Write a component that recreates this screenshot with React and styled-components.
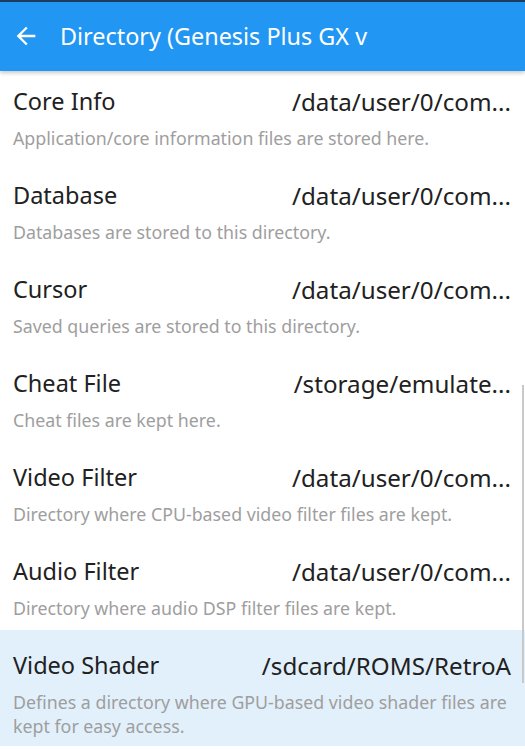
import React from "react";
import styled, { createGlobalStyle } from "styled-components";

const GlobalStyle = createGlobalStyle`
  html, body {
    margin: 0;
    padding: 0;
    background: #ffffff;
    font-family: "Noto Sans", "Open Sans", sans-serif;
  }
`;

const Screen = styled.div`
  position: relative;
  width: 525px;
  height: 750px;
  overflow: hidden;
  background: #fff;
`;

const StatusStrip = styled.div`
  height: 2px;
  background: #1d3d5e;
`;

const Toolbar = styled.header`
  position: relative;
  z-index: 2;
  height: 69px;
  background: #2196f3;
  display: flex;
  align-items: center;
  padding-left: 12px;
  padding-bottom: 2px;
  box-sizing: border-box;
  gap: 20px;
  box-shadow: 0 2px 4px rgba(0, 0, 0, 0.22);
`;

const Title = styled.h1`
  margin: 0;
  color: #fff;
  font-size: 23.4px;
  font-weight: 400;
  white-space: nowrap;
`;

const List = styled.div`
  margin-top: -5px;
  display: flex;
  flex-direction: column;
`;

const Item = styled.div`
  padding: 20px 14px 10px 13px;
  background: ${(p) => (p.$active ? "#e2f0fb" : "transparent")};
  padding-bottom: ${(p) => (p.$active ? "8px" : "10px")};
`;

const Row = styled.div`
  display: flex;
  align-items: center;
  justify-content: space-between;
  height: 30px;
`;

const Label = styled.span`
  font-size: 23.5px;
  color: #212121;
`;

const Value = styled.span`
  font-size: 24.2px;
  color: #212121;
  white-space: nowrap;
`;

const Desc = styled.div`
  margin-top: 10px;
  margin-right: -4px;
  font-size: 17.8px;
  line-height: 24px;
  color: #9e9e9e;
`;

const Scrollbar = styled.div`
  position: absolute;
  right: 1px;
  top: 385px;
  width: 2px;
  height: 298px;
  background: #c9c9c9;
`;

const items = [
  ["Core Info", "/data/user/0/com...", "Application/core information files are stored here."],
  ["Database", "/data/user/0/com...", "Databases are stored to this directory."],
  ["Cursor", "/data/user/0/com...", "Saved queries are stored to this directory."],
  ["Cheat File", "/storage/emulate...", "Cheat files are kept here."],
  ["Video Filter", "/data/user/0/com...", "Directory where CPU-based video filter files are kept."],
  ["Audio Filter", "/data/user/0/com...", "Directory where audio DSP filter files are kept."],
  [
    "Video Shader",
    "/sdcard/ROMS/RetroA",
    "Defines a directory where GPU-based video shader files are kept for easy access.",
  ],
];

function App() {
  return (
    <Screen>
      <GlobalStyle />
      <StatusStrip />
      <Toolbar>
        <svg width="28" height="28" viewBox="0 0 24 24">
          <path
            d="M20 11H7.83l5.59-5.59L12 4l-8 8 8 8 1.41-1.41L7.83 13H20v-2z"
            fill="#fff"
          />
        </svg>
        <Title>Directory (Genesis Plus GX v</Title>
      </Toolbar>
      <List>
        {items.map(([label, value, desc], i) => (
          <Item key={label} $active={i === items.length - 1}>
            <Row>
              <Label>{label}</Label>
              <Value>{value}</Value>
            </Row>
            <Desc>{desc}</Desc>
          </Item>
        ))}
      </List>
      <Scrollbar />
    </Screen>
  );
}

export default App;
